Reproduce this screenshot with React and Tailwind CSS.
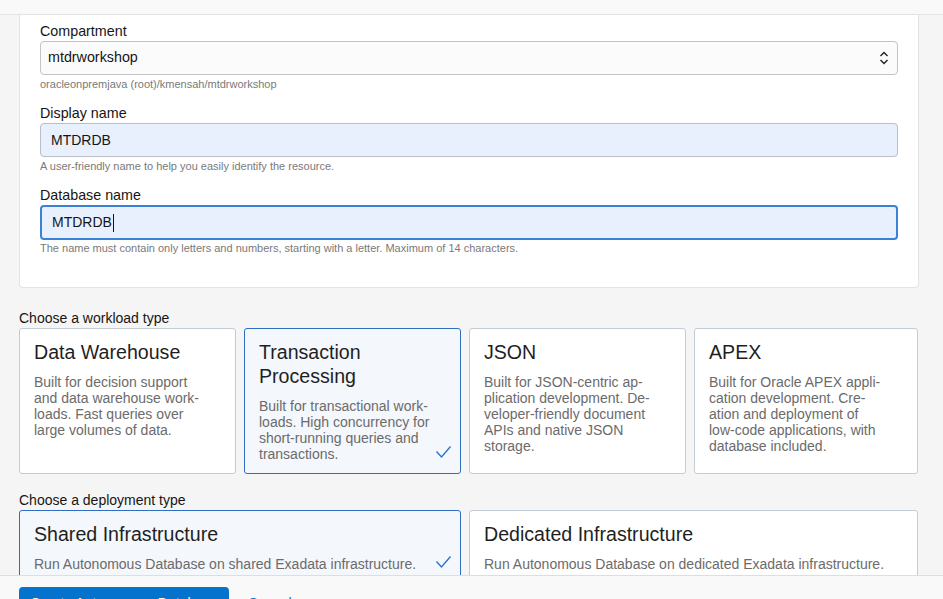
import React from "react";

const font = { fontFamily: '"Liberation Sans", Arial, Helvetica, sans-serif' };

function Check() {
  return (
    <svg className="absolute right-[8px] bottom-[14px]" width="17" height="14" viewBox="0 0 17 14" fill="none">
      <polyline points="1.5,6.5 6.5,12 15.5,1.5" stroke="#2f73c8" strokeWidth="1.4" />
    </svg>
  );
}

function WorkCard({ title, lines, selected }) {
  return (
    <div
      className={
        "relative rounded-[3px] border px-[14px] pt-[11px] pb-[11px] " +
        (selected ? "border-[#2f6fc3] bg-[#f4f7fc]" : "border-[#c3cbd4] bg-white")
      }
    >
      <div className="text-[19.6px] leading-[24px] text-[#1f1f1f]">
        {title.map((t, i) => (
          <div key={i} className="whitespace-nowrap">{t}</div>
        ))}
      </div>
      <div className="mt-[10px] text-[14px] leading-[16px] text-[#6b6b6b]">
        {lines.map((l, i) => (
          <div key={i} className="whitespace-nowrap">{l}</div>
        ))}
      </div>
      {selected && <Check />}
    </div>
  );
}

export default function App() {
  return (
    <div style={font} className="flex h-[599px] w-[943px] flex-col overflow-hidden bg-[#f5f5f5]">
      <div className="h-[15px] shrink-0 border-b border-[#e3e3e3] bg-[#f9f9f9]" />
      <div className="min-h-0 flex-1 overflow-hidden pl-[19px] pr-[24px]">
        <div className="rounded-b-[4px] border-x border-b border-[#e3e3e3] bg-white px-[20px] pt-[6px] pb-[32px]">
          <div className="text-[14.3px] leading-[20px] text-[#161513]">Compartment</div>
          <div className="flex h-[34px] items-center justify-between rounded-[4px] border border-[#c4c4c4] bg-[#fbfbfb] pl-[7px] pr-[8px]">
            <span className="text-[14.3px] text-[#161513]">mtdrworkshop</span>
            <svg width="10" height="14" viewBox="0 0 10 14" fill="none">
              <polyline points="1.5,5 5,1.5 8.5,5" stroke="#222" strokeWidth="1.4" />
              <polyline points="1.5,9 5,12.5 8.5,9" stroke="#222" strokeWidth="1.4" />
            </svg>
          </div>
          <div className="mt-[2px] text-[11px] leading-[14px] text-[#7a7a7a]">oracleonpremjava (root)/kmensah/mtdrworkshop</div>

          <div className="mt-[12px] text-[14.3px] leading-[20px] text-[#161513]">Display name</div>
          <div className="flex h-[34px] items-center rounded-[4px] border border-[#b9bec6] bg-[#e8f0fe] pl-[10px]">
            <span className="text-[14px] text-[#161513]">MTDRDB</span>
          </div>
          <div className="mt-[2px] text-[11px] leading-[14px] text-[#7a7a7a]">A user-friendly name to help you easily identify the resource.</div>

          <div className="mt-[12px] text-[14.3px] leading-[20px] text-[#161513]">Database name</div>
          <div className="flex h-[35px] items-center rounded-[4px] border-2 border-[#3b82d6] bg-[#e8f0fe] pl-[10px]">
            <span className="text-[14px] text-[#161513]">MTDRDB</span>
            <span className="ml-[1px] h-[18px] w-[1px] bg-[#111]" />
          </div>
          <div className="mt-[1px] text-[11px] leading-[14px] text-[#7a7a7a]">The name must contain only letters and numbers, starting with a letter. Maximum of 14 characters.</div>
        </div>

        <div className="mt-[20px] text-[14px] leading-[20px] text-[#161513]">Choose a workload type</div>
        <div className="grid grid-cols-[217px_217px_217px_224px] gap-[8px]">
          <WorkCard
            title={["Data Warehouse"]}
            lines={["Built for decision support", "and data warehouse work-", "loads. Fast queries over", "large volumes of data."]}
          />
          <WorkCard
            selected
            title={["Transaction", "Processing"]}
            lines={["Built for transactional work-", "loads. High concurrency for", "short-running queries and", "transactions."]}
          />
          <WorkCard
            title={["JSON"]}
            lines={["Built for JSON-centric ap-", "plication development. De-", "veloper-friendly document", "APIs and native JSON", "storage."]}
          />
          <WorkCard
            title={["APEX"]}
            lines={["Built for Oracle APEX appli-", "cation development. Cre-", "ation and deployment of", "low-code applications, with", "database included."]}
          />
        </div>

        <div className="mt-[16px] text-[14px] leading-[20px] text-[#161513]">Choose a deployment type</div>
        <div className="grid grid-cols-[442px_449px] gap-[8px]">
          <WorkCard
            selected
            title={["Shared Infrastructure"]}
            lines={["Run Autonomous Database on shared Exadata infrastructure."]}
          />
          <WorkCard
            title={["Dedicated Infrastructure"]}
            lines={["Run Autonomous Database on dedicated Exadata infrastructure."]}
          />
        </div>
      </div>
      <div className="h-[24px] shrink-0 overflow-hidden border-t border-[#dedede] bg-[#f9f9f9] pl-[19px]">
        <div className="mt-[11px] flex items-start gap-[19px]">
          <div className="flex h-[32px] w-[210px] items-center justify-center rounded-[4px] bg-[#0572ce] text-[14px] text-white">
            Create Autonomous Database
          </div>
          <div className="flex h-[32px] items-center text-[14px] text-[#0572ce]">Cancel</div>
        </div>
      </div>
    </div>
  );
}
